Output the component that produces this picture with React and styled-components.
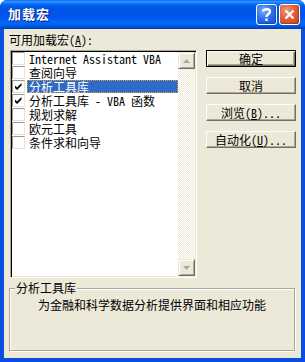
import React from "react";
import styled, { createGlobalStyle } from "styled-components";

const Global = createGlobalStyle`
  html, body { margin: 0; padding: 0; overflow: hidden; background: #fff; }
  * { box-sizing: border-box; }
`;

const UI = `"Noto Sans Mono CJK SC", "Noto Sans CJK SC", "Liberation Mono", monospace`;

const Window = styled.div`
  width: 305px;
  height: 362px;
  display: flex;
  flex-direction: column;
  background: #0a4fe0;
  border-radius: 7px 7px 0 0;
  overflow: hidden;
  font-family: ${UI};
  font-size: 12px;
  color: #000;
`;

const TitleBar = styled.div`
  height: 29px;
  flex: none;
  display: flex;
  align-items: center;
  padding: 0 5px 0 8px;
  gap: 2px;
  background: linear-gradient(to bottom, #0058ee 0%, #3593ff 4%, #288eff 7%, #127dff 10%, #036ffc 14%, #0262ee 18%, #0057e5 24%, #0054e3 30%, #0055eb 56%, #005bf5 66%, #026afe 76%, #0062ef 86%, #0052d6 92%, #0046c4 96%, #003ab0 100%);
`;

const Title = styled.div`
  flex: 1;
  color: #fff;
  font-family: "Noto Sans CJK SC", sans-serif;
  font-weight: 700;
  font-size: 13px;
  letter-spacing: 1px;
  line-height: 14px;
  text-shadow: 1px 1px 0 #0a1a8a;
  padding-bottom: 1px;
`;

const CaptionButton = styled.div`
  width: 21px;
  height: 21px;
  flex: none;
  border: 1px solid #fff;
  border-radius: 3px;
  display: flex;
  align-items: center;
  justify-content: center;
  background: ${(p) =>
    p.$close
      ? "radial-gradient(circle at 35% 30%, #f29a7a 0%, #e0603a 45%, #c4411d 100%)"
      : "radial-gradient(circle at 35% 30%, #7fb1ff 0%, #2c6ff0 45%, #1550d8 100%)"};
  box-shadow: inset -1px -1px 1px rgba(0,0,0,0.25);
`;

const Client = styled.div`
  flex: 1;
  margin: 0 4px 4px 4px;
  background: #ece9d8;
  padding: 5px 5px 7px 5px;
  display: grid;
  grid-template-columns: 188px 90px;
  grid-template-rows: 12px 228px 1fr;
  column-gap: 9px;
  row-gap: 4px;
`;

const Label = styled.div`
  grid-column: 1 / 3;
  line-height: 12px;
  height: 12px;
  white-space: nowrap;
`;

const ListBox = styled.div`
  margin-left: 1px;
  display: flex;
  border: 1px solid;
  border-color: #aca899 #fff #fff #aca899;
  box-shadow: inset 1px 1px 0 #000, inset -1px -1px 0 #ece9d8;
  padding: 1px;
  background: #fff;
`;

const Items = styled.div`
  flex: 1;
  display: flex;
  flex-direction: column;
  background: #fff;
`;

const Row = styled.div`
  height: 14px;
  display: flex;
  align-items: flex-start;
  flex: none;
`;

const Check = styled.div`
  width: 13px;
  height: 13px;
  flex: none;
  background: #fff;
  border: 1px solid;
  border-color: #9c9a90 #e6e4da #e6e4da #9c9a90;
  display: flex;
  align-items: center;
  justify-content: center;
`;

const ItemText = styled.div`
  flex: 1;
  margin-left: 2px;
  height: 13px;
  line-height: 13px;
  padding-left: 2px;
  white-space: nowrap;
  color: ${(p) => (p.$selected ? "#fff" : "#000")};
  background: ${(p) => (p.$selected ? "#316ac5" : "transparent")};
  outline: ${(p) => (p.$selected ? "1px dotted #e0a040" : "none")};
  outline-offset: -1px;
`;

const ScrollBar = styled.div`
  width: 17px;
  flex: none;
  display: flex;
  flex-direction: column;
  background-color: #fff;
  background-image: repeating-conic-gradient(#ece9d8 0 25%, #fff 0 50%);
  background-size: 2px 2px;
`;

const Track = styled.div`
  flex: 1;
`;

const ScrollButton = styled.div`
  width: 17px;
  height: 17px;
  flex: none;
  background: #ece9d8;
  border: 1px solid;
  border-color: #ece9d8 #716f64 #716f64 #ece9d8;
  box-shadow: inset 1px 1px 0 #fff, inset -1px -1px 0 #aca899;
  display: flex;
  align-items: center;
  justify-content: center;
`;

const Buttons = styled.div`
  display: flex;
  flex-direction: column;
  gap: 10px;
`;

const Button = styled.div`
  height: 17px;
  background: #ece9d8;
  display: flex;
  align-items: center;
  justify-content: center;
  white-space: nowrap;
  line-height: 12px;
  border: 1px solid;
  border-color: ${(p) => (p.$default ? "#000" : "#fff #716f64 #716f64 #fff")};
  box-shadow: ${(p) =>
    p.$default
      ? "inset 1px 1px 0 #fff, inset -1px -1px 0 #716f64, inset -2px -2px 0 #aca899"
      : "inset -1px -1px 0 #aca899"};
`;

const Group = styled.fieldset`
  grid-column: 1 / 3;
  margin: 0 1px 0 0;
  padding: 5px 0 0 0;
  min-width: 0;
  border: 1px solid #aca899;
  box-shadow: inset 1px 1px 0 #fff, 1px 1px 0 #fff;
`;

const Legend = styled.legend`
  margin-left: 5px;
  padding: 0 1px;
  line-height: 12px;
  height: 12px;
  background: #ece9d8;
`;

const Description = styled.div`
  text-align: center;
  line-height: 12px;
`;

const Tick = () => (
  <svg width="9" height="9" viewBox="0 0 9 9">
    <path d="M1 3.5 L3 5.5 L7.5 1 L7.5 3.5 L3 8 L1 6 Z" fill="#000" />
  </svg>
);

const Arrow = ({ down }) => (
  <svg width="7" height="4" viewBox="0 0 7 4">
    <path d={down ? "M0 0 H7 L3.5 4 Z" : "M0 4 H7 L3.5 0 Z"} fill="#aca899" />
  </svg>
);

const items = [
  { text: "Internet Assistant VBA", checked: false },
  { text: "查阅向导", checked: false },
  { text: "分析工具库", checked: true, selected: true },
  { text: "分析工具库 - VBA 函数", checked: true },
  { text: "规划求解", checked: false },
  { text: "欧元工具", checked: false },
  { text: "条件求和向导", checked: false },
];

export default function App() {
  return (
    <>
      <Global />
      <Window>
        <TitleBar>
          <Title>加载宏</Title>
          <CaptionButton>
            <svg width="11" height="15" viewBox="0 0 11 15">
              <path d="M2 4.5 C2 1.5 9 1.5 9 4.5 C9 7 5.5 7 5.5 10" fill="none" stroke="#fff" strokeWidth="2.4" />
              <rect x="4.3" y="11.5" width="2.4" height="2.4" fill="#fff" />
            </svg>
          </CaptionButton>
          <CaptionButton $close>
            <svg width="11" height="11" viewBox="0 0 11 11">
              <path d="M1.5 1.5 L9.5 9.5 M9.5 1.5 L1.5 9.5" stroke="#fff" strokeWidth="2.2" />
            </svg>
          </CaptionButton>
        </TitleBar>
        <Client>
          <Label>
            可用加载宏(<u>A</u>):
          </Label>
          <ListBox>
            <Items>
              {items.map((it) => (
                <Row key={it.text}>
                  <Check>{it.checked && <Tick />}</Check>
                  <ItemText $selected={it.selected}>{it.text}</ItemText>
                </Row>
              ))}
            </Items>
            <ScrollBar>
              <ScrollButton>
                <Arrow />
              </ScrollButton>
              <Track />
              <ScrollButton>
                <Arrow down />
              </ScrollButton>
            </ScrollBar>
          </ListBox>
          <Buttons>
            <Button $default>确定</Button>
            <Button>取消</Button>
            <Button>
              浏览(<u>B</u>)...
            </Button>
            <Button>
              自动化(<u>U</u>)...
            </Button>
          </Buttons>
          <Group>
            <Legend>分析工具库</Legend>
            <Description>为金融和科学数据分析提供界面和相应功能</Description>
          </Group>
        </Client>
      </Window>
    </>
  );
}
